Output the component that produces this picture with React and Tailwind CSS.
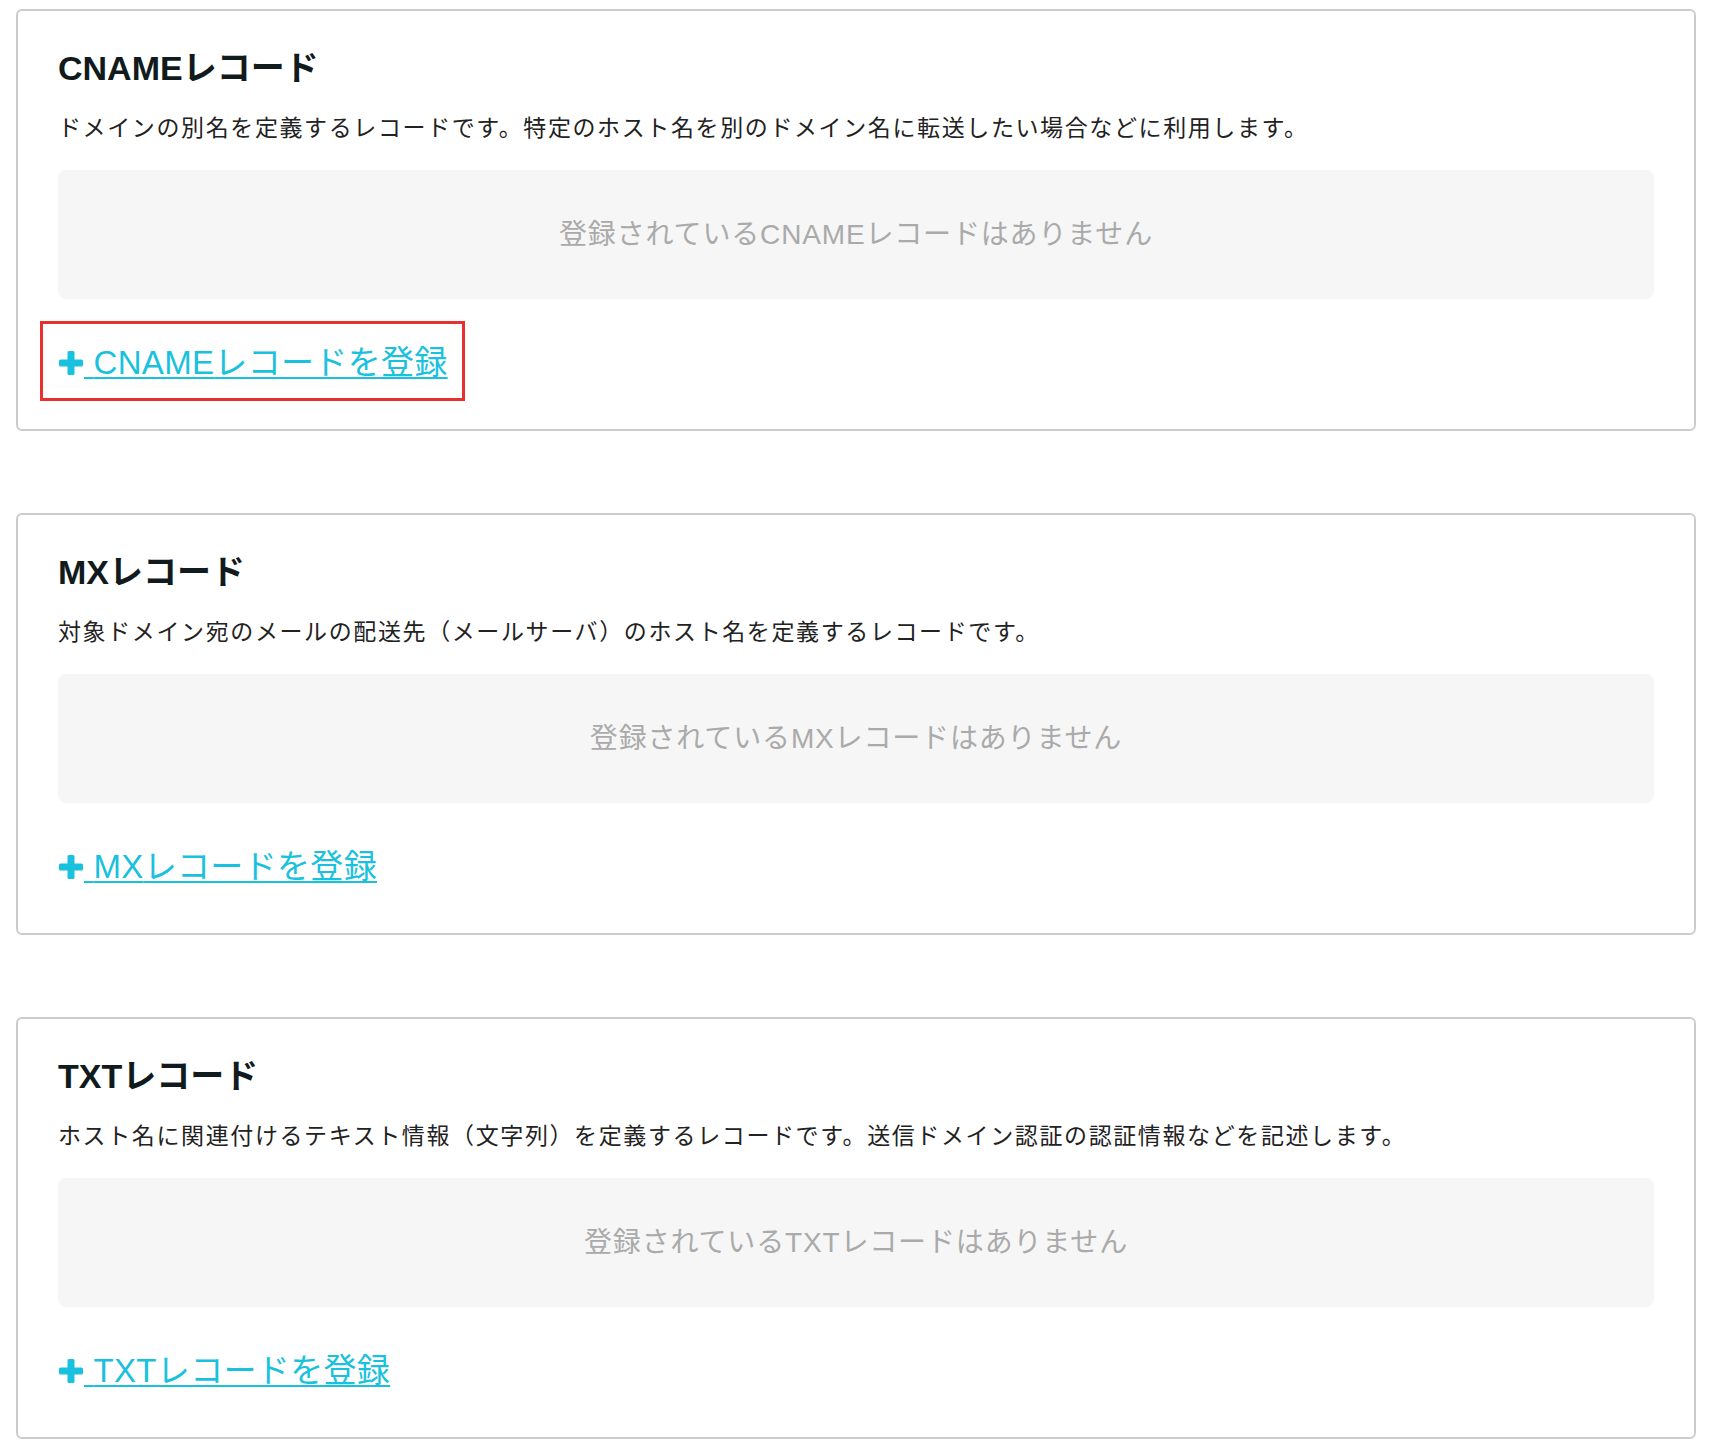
import React from 'react';

// dns record sections, each empty with a register link
const sections = [
  {
    type: 'CNAME',
    description:
      'ドメインの別名を定義するレコードです。特定のホスト名を別のドメイン名に転送したい場合などに利用します。',
    highlighted: true,
  },
  {
    type: 'MX',
    description: '対象ドメイン宛のメールの配送先（メールサーバ）のホスト名を定義するレコードです。',
    highlighted: false,
  },
  {
    type: 'TXT',
    description:
      'ホスト名に関連付けるテキスト情報（文字列）を定義するレコードです。送信ドメイン認証の認証情報などを記述します。',
    highlighted: false,
  },
];

const PlusIcon = () => (
  <svg width="26" height="26" viewBox="0 0 26 26" className="shrink-0">
    <rect x="9.5" y="1" width="7" height="24" rx="1.5" fill="currentColor" />
    <rect x="1" y="9.5" width="24" height="7" rx="1.5" fill="currentColor" />
  </svg>
);

const RecordSection = ({ type, description, highlighted }) => (
  <div className="rounded-md border-2 border-[#cccccc] bg-white px-10 pt-10 pb-[28px]">
    <h2 className="text-[34px] font-bold leading-none text-[#111a1c]">{type}レコード</h2>
    <p className="mt-[27px] text-[23px] leading-[33px] tracking-[0.07em] text-[#222222]">{description}</p>

    {/* empty state */}
    <div className="mt-[25px] flex h-[129px] items-center justify-center rounded-lg bg-[#f6f6f6] text-[28px] tracking-[0.03em] text-[#aaaaaa]">
      登録されている{type}レコードはありません
    </div>

    {/* register link, first one is marked with a red frame */}
    <div
      className={`mt-[22px] -ml-[18px] inline-flex border-[3px] pt-[19px] pb-[15px] pl-[15px] pr-[14px] ${
        highlighted ? 'border-[#e8302f]' : 'border-transparent'
      }`}
    >
      <a href="#" className="flex items-center text-[33px] leading-[40px] tracking-[0.01em] text-[#19c1de]">
        <PlusIcon />
        <span className="underline decoration-2 underline-offset-[3px]">{'\u00a0'}{type}レコードを登録</span>
      </a>
    </div>
  </div>
);

const App = () => {
  return (
    <div className="min-h-screen bg-white pt-[9px] pb-[11px] pl-4 pr-5 font-['Liberation_Sans','Noto_Sans_CJK_JP',sans-serif]">
      <div className="flex flex-col gap-[82px]">
        {sections.map((section) => (
          <RecordSection key={section.type} {...section} />
        ))}
      </div>
    </div>
  );
};

export default App;
